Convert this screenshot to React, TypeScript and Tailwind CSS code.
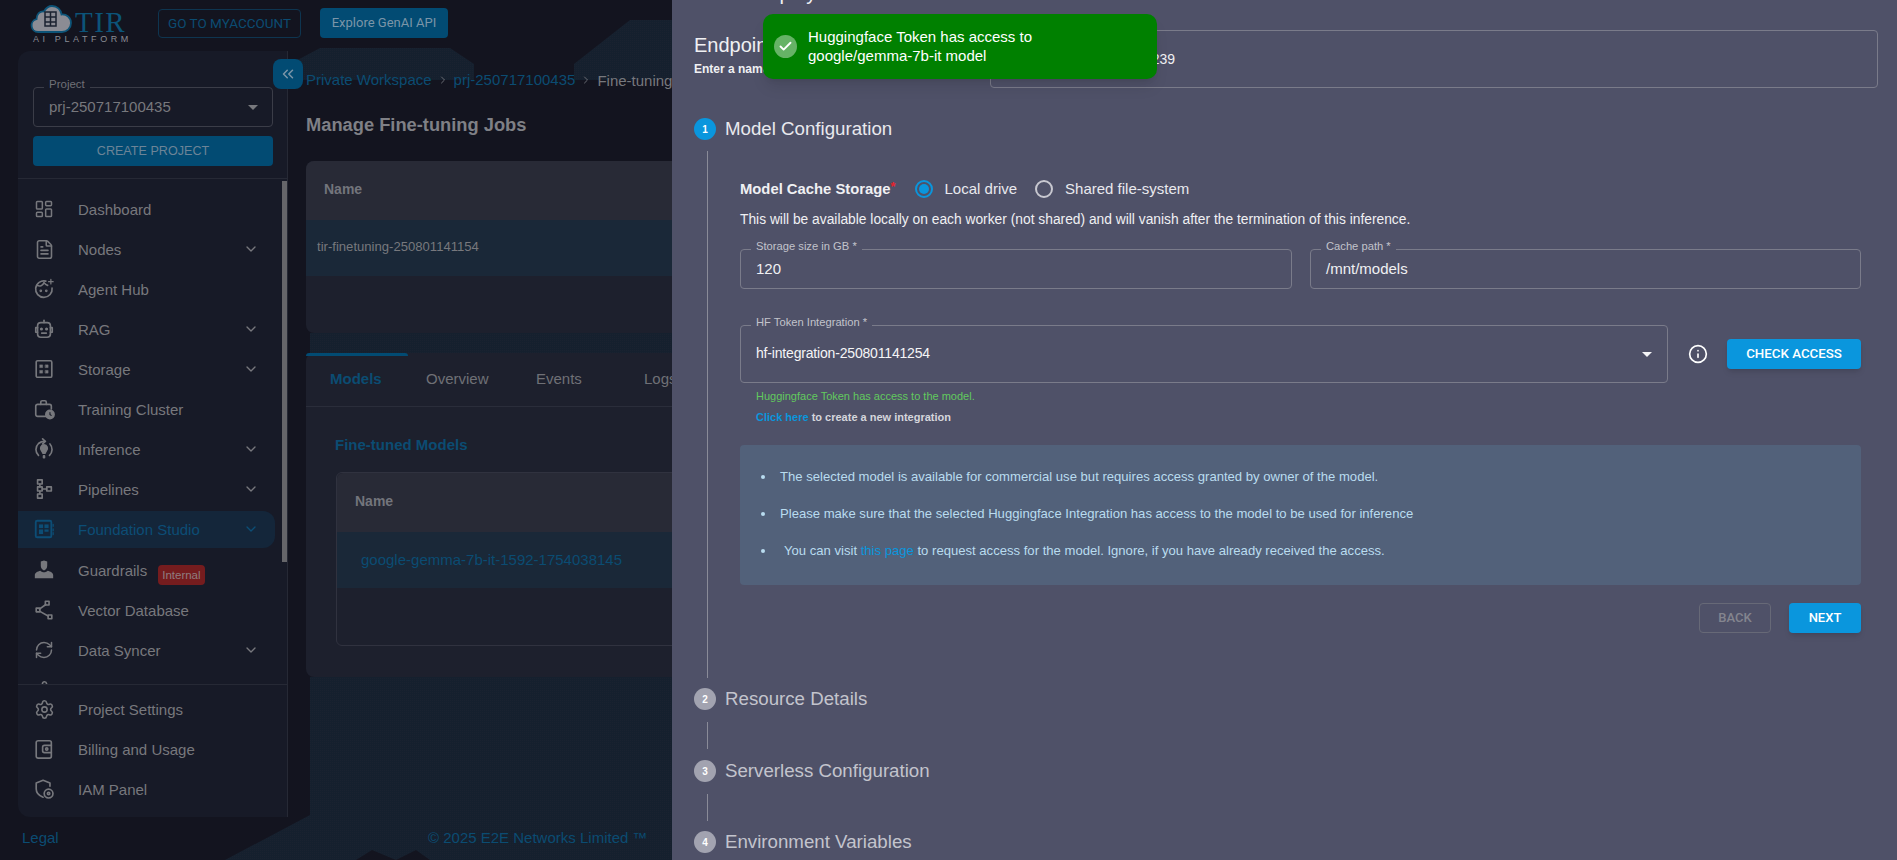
import { ChevronDown, ChevronRight, ChevronsLeft, FileText, LayoutDashboard, RefreshCw, Settings, Info, Check } from 'lucide-react';
import type { ReactNode } from 'react';

const sans = 'font-["Liberation_Sans",Arial,sans-serif]';

function Svg({ children, className = '' }: { children: ReactNode; className?: string }) {
  return (
    <svg viewBox="0 0 24 24" fill="none" stroke="currentColor" strokeWidth="1.8" strokeLinecap="round" strokeLinejoin="round" className={`h-[22px] w-[22px] ${className}`}>
      {children}
    </svg>
  );
}

const icons: Record<string, ReactNode> = {
  dashboard: <LayoutDashboard className="h-[20px] w-[20px]" strokeWidth={1.8} />,
  nodes: <FileText className="h-[21px] w-[21px]" strokeWidth={1.8} />,
  agent: (
    <Svg>
      <path d="M14 3.400A9 9 0 1 0 20.800 11" />
      <path d="M4.500 8c3 1.500 6 .5 7.500-3 1 1.500 2 2.500 4 3" />
      <circle cx="8.500" cy="14" r=".6" fill="currentColor" />
      <circle cx="14.500" cy="14" r=".6" fill="currentColor" />
      <path d="M19.500 1.500v5M17 4h5" strokeWidth="1.400" />
    </Svg>
  ),
  rag: (
    <Svg>
      <path d="M12 2.500v2.500" />
      <rect x="5" y="5" width="14" height="16" rx="3.500" />
      <path d="M5 10.500H3v5h2M19 10.500h2v5h-2" />
      <circle cx="9.200" cy="12" r=".8" fill="currentColor" />
      <circle cx="14.800" cy="12" r=".8" fill="currentColor" />
      <path d="M9.500 16.500h5" />
    </Svg>
  ),
  storage: (
    <Svg>
      <rect x="3.500" y="3" width="17" height="18" rx="1.500" />
      <rect x="7.500" y="7.500" width="3" height="3" fill="currentColor" strokeWidth=".5" />
      <rect x="13.500" y="7.500" width="3" height="3" fill="currentColor" strokeWidth=".5" />
      <rect x="7.500" y="13.500" width="3" height="3" fill="currentColor" strokeWidth=".5" />
      <rect x="13.500" y="13.500" width="3" height="3" fill="currentColor" strokeWidth=".5" />
    </Svg>
  ),
  training: (
    <Svg>
      <path d="M14 20H5a2 2 0 0 1-2-2V9a2 2 0 0 1 2-2h13a2 2 0 0 1 2 2v3" />
      <path d="M8.500 7V4.500A1.500 1.500 0 0 1 10 3h3a1.500 1.500 0 0 1 1.500 1.500V7" />
      <circle cx="18.500" cy="18" r="4.500" fill="currentColor" />
      <path d="M18.500 15.800V18l1.300 1" stroke="#171a27" strokeWidth="1.200" />
    </Svg>
  ),
  inference: (
    <Svg>
      <path d="M6 19A9 9 0 0 1 6 6c1.800-1.500 4-2.300 6.500-2.300" />
      <path d="M10.500 1l3 2.700-3 2.700" />
      <path d="M18.500 6.500A9 9 0 0 1 18 19" />
      <path d="M12 7.500a3.800 3.800 0 0 1 2.500 6.500c-.8.8-1.200 1.500-1.300 2.500h-2.400c-.1-1-.5-1.700-1.300-2.500A3.800 3.800 0 0 1 12 7.500z" fill="currentColor" />
      <path d="M11.500 19.500h1v2h-1z" fill="currentColor" />
    </Svg>
  ),
  pipelines: (
    <Svg>
      <rect x="5" y="2" width="5" height="4.500" />
      <rect x="5" y="9.700" width="5" height="4.500" />
      <rect x="5" y="17.500" width="5" height="4.500" />
      <rect x="15" y="9.700" width="5" height="4.500" />
      <path d="M7.500 6.500v3.200M7.500 14.200v3.300M10 12h5" />
    </Svg>
  ),
  foundation: (
    <Svg>
      <rect x="3" y="3" width="17" height="18" rx="1.500" strokeWidth="2" />
      <rect x="6.500" y="7" width="4.500" height="4" fill="currentColor" stroke="none" />
      <rect x="12.500" y="7" width="4.500" height="4" fill="currentColor" stroke="none" />
      <rect x="6.500" y="12.500" width="4.500" height="5" fill="currentColor" stroke="none" />
      <rect x="12.500" y="12.500" width="4.500" height="2.500" fill="currentColor" stroke="none" />
      <path d="M22 7v2M22 12v2M22 16v2" strokeWidth="1.400" />
    </Svg>
  ),
  guardrails: (
    <Svg>
      <path d="M12 1.500l3.500 1.300v4.500c0 2.700-1.600 4.400-3.500 5.200-1.900-.8-3.500-2.500-3.500-5.200V2.800z" fill="currentColor" stroke="none" />
      <path d="M8 12.800c1 1 2.500 1.700 4 1.700s3-.7 4-1.700c3 .7 6 2.300 6 4.700V21H2v-3.500c0-2.400 3-4 6-4.700z" fill="currentColor" stroke="none" />
    </Svg>
  ),
  vector: (
    <Svg>
      <rect x="13.500" y="2.500" width="4" height="4" />
      <rect x="3.500" y="10" width="4" height="4" />
      <rect x="16.500" y="17.500" width="4" height="4" />
      <path d="M14 6l-7 5M7.500 13.500l9 5" />
    </Svg>
  ),
  syncer: <RefreshCw className="h-[20px] w-[20px]" strokeWidth={1.8} />,
  settings: <Settings className="h-[21px] w-[21px]" strokeWidth={1.8} />,
  billing: (
    <Svg>
      <rect x="3.500" y="3" width="16.500" height="19" rx="2" />
      <path d="M20 8h-7.500a2 2 0 0 0-2 2v4a2 2 0 0 0 2 2H20" />
      <circle cx="15" cy="12" r="1.200" />
    </Svg>
  ),
  iam: (
    <Svg>
      <path d="M11 21c-4-1.500-7.500-4-7.500-9V5.500L11 2.500l7.500 3v3.500" />
      <circle cx="17" cy="17" r="4.800" />
      <circle cx="17" cy="17" r="1.300" />
    </Svg>
  ),
};

function NavItem({ icon, label, chevron, active, badge }: { icon: string; label: string; chevron?: boolean; active?: boolean; badge?: boolean }) {
  return (
    <div className={`flex h-[40px] items-center ${active ? 'text-[#0c4d75]' : 'text-[#77787d]'}`}>
      <div className={`flex h-[37px] w-[257px] items-center rounded-r-xl ${active ? 'bg-[#14263a]' : ''}`}>
        <div className="flex w-[60px] shrink-0 justify-center">
          <span className="ml-[-8px] flex w-[26px] justify-center">{icons[icon]}</span>
        </div>
        <span className="text-[15px] leading-none">{label}</span>
        {badge && <span className="ml-[11px] mt-[9px] rounded-[4px] bg-[#751c1e] px-[4px] py-[3px] text-[11.500px] leading-[14px] text-[#8f7d80]">Internal</span>}
        {chevron && <ChevronDown className="ml-auto mr-[16px] h-[16px] w-[16px]" strokeWidth={2} />}
      </div>
    </div>
  );
}

function Sidebar() {
  return (
    <aside className="relative flex h-[766px] w-[270px] shrink-0 flex-col rounded-l-xl border-r border-[#262935] bg-[#171a27]">
      <div className="border-b border-[#262935] px-[15px] pt-[36px] pb-[12px]">
        <div className="relative flex h-[40px] w-[240px] items-center justify-between rounded-[4px] border border-[#3b3d48] pl-[15px] pr-[14px]">
          <span className="absolute left-[10px] top-[-11px] bg-[#171a27] px-[5px] text-[11.500px] leading-[14px] text-[#6f7076]">Project</span>
          <span className="text-[15px] text-[#77787d]">prj-250717100435</span>
          <span className="h-0 w-0 border-x-[5px] border-t-[5px] border-x-transparent border-t-[#77787d]" />
        </div>
        <div className="mt-[9px] flex h-[30px] w-[240px] items-center justify-center rounded-[4px] bg-[#024b73] text-[12.600px] font-medium text-[#6c8497]">CREATE PROJECT</div>
      </div>
      <div className="relative h-[505px] overflow-hidden pt-[10px]">
        <NavItem icon="dashboard" label="Dashboard" />
        <NavItem icon="nodes" label="Nodes" chevron />
        <NavItem icon="agent" label="Agent Hub" />
        <NavItem icon="rag" label="RAG" chevron />
        <NavItem icon="storage" label="Storage" chevron />
        <NavItem icon="training" label="Training Cluster" />
        <NavItem icon="inference" label="Inference" chevron />
        <NavItem icon="pipelines" label="Pipelines" chevron />
        <NavItem icon="foundation" label="Foundation Studio" chevron active />
        <div className="pt-[1px]">
          <NavItem icon="guardrails" label="Guardrails" badge />
          <NavItem icon="vector" label="Vector Database" />
          <NavItem icon="syncer" label="Data Syncer" chevron />
          <NavItem icon="settings" label="" />
        </div>
        <div className="absolute right-0 top-[2px] h-[381px] w-[5px] bg-[#66666a]" />
      </div>
      <div className="border-t border-[#262935] pt-[4px]">
        <NavItem icon="settings" label="Project Settings" />
        <NavItem icon="billing" label="Billing and Usage" />
        <NavItem icon="iam" label="IAM Panel" />
      </div>
    </aside>
  );
}

function Main() {
  return (
    <main className="w-[1400px] shrink-0 pl-[18px]">
      <div className="flex h-[57px] items-center gap-[5px] text-[15px] leading-none">
        <span className="text-[#0b4c72]">Private Workspace</span>
        <ChevronRight className="h-[12px] w-[12px] text-[#6a6c74]" />
        <span className="text-[#0b4c72]">prj-250717100435</span>
        <ChevronRight className="h-[12px] w-[12px] text-[#6a6c74]" />
        <span className="mt-[2px] text-[#77787d]">Fine-tuning Jobs</span>
      </div>
      <h1 className="flex h-[53px] items-start pt-[6px] text-[18.300px] font-bold leading-[22px] text-[#7f8086]">Manage Fine-tuning Jobs</h1>
      <section className="h-[172px] rounded-lg bg-[#1d202d]">
        <div className="flex h-[59px] items-center rounded-t-lg bg-[#282a36] pb-[2px] pl-[18px] text-[14px] font-bold text-[#73757c]">Name</div>
        <div className="flex h-[56px] items-center bg-[#1a2838] pb-[2px] pl-[11px] text-[13.100px] text-[#77787d]">tir-finetuning-250801141154</div>
      </section>
      <section className="relative mt-[20px] h-[324px] rounded-lg bg-[#1d202d]">
        <div className="absolute left-0 top-0 h-[3px] w-[102px] rounded-t bg-[#024b73]" />
        <div className="flex h-[54px] items-center border-b border-[#2a2d3a] text-[15px] text-[#6f7076]">
          <span className="ml-[24px] w-[96px] font-bold text-[#0b4c72]">Models</span>
          <span className="w-[110px]">Overview</span>
          <span className="w-[108px]">Events</span>
          <span>Logs</span>
        </div>
        <h2 className="ml-[29px] mt-[28px] text-[15px] font-bold leading-[20px] text-[#0b4c72]">Fine-tuned Models</h2>
        <div className="ml-[30px] mt-[17px] h-[174px] rounded-md border border-[#30323f]">
          <div className="flex h-[59px] items-center rounded-t-md bg-[#282a36] pb-[2px] pl-[18px] text-[14px] font-bold text-[#73757c]">Name</div>
          <div className="flex h-[56px] items-center bg-[#1a2838] pl-[24px] text-[15px] text-[#0b4c72]">google-gemma-7b-it-1592-1754038145</div>
        </div>
      </section>
    </main>
  );
}

function Step({ n, label, active }: { n: number; label: string; active?: boolean }) {
  return (
    <div className="flex h-[22px] items-center gap-[9px]">
      <span className={`flex h-[22px] w-[22px] items-center justify-center rounded-full text-[10px] font-bold text-white ${active ? 'bg-[#0a96dd]' : 'bg-[#a2a3b0]'}`}>{n}</span>
      <span className={`text-[18.700px] leading-none ${active ? 'text-[#e9e9ee]' : 'text-[#c3c4cd]'}`}>{label}</span>
    </div>
  );
}

function Field({ label, value, className }: { label: string; value: string; className: string }) {
  return (
    <div className={`relative flex h-[40px] items-center rounded-[4px] border border-[#7a7b8a] pl-[15px] ${className}`}>
      <span className="absolute left-[10px] top-[-11px] bg-[#4f5168] px-[5px] text-[11.200px] leading-[14px] text-[#c2c3cb]">{label}</span>
      <span className="text-[15px] text-[#f0f0f3]">{value}</span>
    </div>
  );
}

function Drawer() {
  return (
    <div className={`absolute right-0 top-0 h-[860px] w-[1225px] overflow-hidden bg-[#4f5168] ${sans}`}>
      <div className="-mt-[17px] pl-[22px] text-[20px] leading-[20px] text-[#f0f0f3]">Model Deploy</div>
      {/* Endpoint name */}
      <div className="mt-[27px] flex h-[58px] items-start pl-[22px]">
        <div className="w-[296px] pt-[3px]">
          <div className="text-[20px] leading-[24px] text-[#f0f0f3]">Endpoint Name</div>
          <div className="mt-[5px] text-[12px] font-bold leading-[14px] text-[#f0f0f3]">Enter a name for your endpoint</div>
        </div>
        <div className="flex h-[58px] w-[888px] items-center rounded-[4px] border border-[#7a7b8a] pl-[17px]">
          <span className="text-[14px] text-[#f0f0f3]">tir-endpoint-250801141239</span>
        </div>
      </div>

      <div className="mt-[30px] pl-[22px]">
        <Step n={1} label="Model Configuration" active />
      </div>
      {/* Step body, hung off the stepper line */}
      <div className="ml-[35px] mt-[11px] h-[527px] border-l border-[#8a8b98] pl-[32px] pt-[28px]">
        <div className="flex h-[20px] items-center">
          <span className="text-[14.800px] font-bold text-[#f0f0f3]">Model Cache Storage</span>
          <span className="mb-[5px] text-[13px] font-bold leading-none text-[#e8222c]">*</span>
          <span className="ml-[19px] flex h-[18px] w-[18px] items-center justify-center rounded-full border-2 border-[#0a96dd]">
            <span className="h-[10px] w-[10px] rounded-full bg-[#0a96dd]" />
          </span>
          <span className="ml-[12px] text-[15px] text-[#e9e9ee]">Local drive</span>
          <span className="ml-[18px] h-[18px] w-[18px] rounded-full border-2 border-[#c8c8d0]" />
          <span className="ml-[12px] text-[15px] text-[#e9e9ee]">Shared file-system</span>
        </div>
        <p className="mt-[12px] text-[13.800px] leading-[18px] text-[#f0f0f3]">This will be available locally on each worker (not shared) and will vanish after the termination of this inference.</p>
        <div className="mt-[20px] flex gap-[18px]">
          <Field label="Storage size in GB *" value="120" className="w-[552px]" />
          <Field label="Cache path *" value="/mnt/models" className="w-[551px]" />
        </div>
        <div className="mt-[36px] flex items-center">
          <div className="relative flex h-[58px] w-[928px] items-center justify-between rounded-[4px] border border-[#7a7b8a] px-[15px]">
            <span className="absolute left-[10px] top-[-11px] bg-[#4f5168] px-[5px] text-[11.200px] leading-[14px] text-[#c2c3cb]">HF Token Integration *</span>
            <span className="mb-[2px] text-[14px] tracking-[-0.180px] text-[#f5f5f7]">hf-integration-250801141254</span>
            <span className="h-0 w-0 border-x-[5px] border-t-[5px] border-x-transparent border-t-[#f5f5f7]" />
          </div>
          <Info className="ml-[20px] h-[20px] w-[20px] text-white" strokeWidth={2} />
          <button className="ml-[19px] h-[30px] w-[134px] rounded-[4px] bg-[#0a96dd] font-['Roboto',sans-serif] text-[13.300px] font-medium text-white shadow-md">CHECK ACCESS</button>
        </div>
        <div className="ml-[16px] mt-[6px] text-[11px] font-medium leading-[14px] text-[#62c95e]">Huggingface Token has access to the model.</div>
        <div className="ml-[16px] mt-[7px] text-[11px] font-bold leading-[14px] text-[#d5d6dc]">
          <span className="text-[#0a96dd]">Click here</span> to create a new integration
        </div>
        <div className="mt-[21px] h-[140px] w-[1121px] rounded-[4px] bg-[#52617a] pt-[23px] text-[13.100px] text-[#b9dcef]">
          <div className="flex h-[18px] items-center">
            <span className="ml-[21px] mr-[15px] h-[4px] w-[4px] rounded-full bg-[#b9dcef]" />
            The selected model is available for commercial use but requires access granted by owner of the model.
          </div>
          <div className="mt-[19px] flex h-[18px] items-center">
            <span className="ml-[21px] mr-[15px] h-[4px] w-[4px] rounded-full bg-[#b9dcef]" />
            Please make sure that the selected Huggingface Integration has access to the model to be used for inference
          </div>
          <div className="mt-[19px] flex h-[18px] items-center">
            <span className="ml-[21px] mr-[19px] h-[4px] w-[4px] rounded-full bg-[#b9dcef]" />
            <span>You can visit <span className="text-[#0a96dd]">this page</span> to request access for the model. Ignore, if you have already received the access.</span>
          </div>
        </div>
        <div className="mt-[18px] flex w-[1121px] justify-end gap-[18px] font-['Roboto',sans-serif] text-[13px] font-medium">
          <button className="h-[30px] w-[72px] rounded-[4px] border border-[#676977] text-[#84858f]">BACK</button>
          <button className="h-[30px] w-[72px] rounded-[4px] bg-[#0a96dd] text-white shadow-md">NEXT</button>
        </div>
      </div>
      <div className="mt-[10px] pl-[22px]">
        <Step n={2} label="Resource Details" />
      </div>
      <div className="ml-[35px] mt-[12px] h-[27px] border-l border-[#8a8b98]" />
      <div className="mt-[11px] pl-[22px]">
        <Step n={3} label="Serverless Configuration" />
      </div>
      <div className="ml-[35px] mt-[12px] h-[27px] border-l border-[#8a8b98]" />
      <div className="mt-[10px] pl-[22px]">
        <Step n={4} label="Environment Variables" />
      </div>
    </div>
  );
}

function Toast() {
  return (
    <div className={`absolute left-[763px] top-[14px] flex h-[65px] w-[394px] items-center rounded-[10px] bg-[#008000] pl-[11px] shadow-lg ${sans}`}>
      <span className="flex h-[23px] w-[23px] shrink-0 items-center justify-center rounded-full bg-[#66b366]">
        <Check className="h-[15px] w-[15px] text-white" strokeWidth={3} />
      </span>
      <p className="mb-[2px] ml-[11px] w-[300px] text-[15px] leading-[19px] text-white">Huggingface Token has access to google/gemma-7b-it model</p>
    </div>
  );
}

function Texture() {
  return (
    <svg className="absolute left-0 top-0 h-[860px] w-[672px]" viewBox="0 0 672 860">
      <defs>
        <pattern id="dither" width="2" height="2" patternUnits="userSpaceOnUse">
          <rect width="2" height="2" fill="#15202e" />
          <rect width="1" height="1" fill="#1a2230" />
        </pattern>
      </defs>
      <path d="M290 64l30-16h130l24 16v16H290z" fill="url(#dither)" />
      <path d="M574 64l56-44h42v60H574z" fill="url(#dither)" />
      <path d="M310 333h362v20H310zM310 677h362v183H430l-14 -10-20 10-24-10-16 10H225l85-45z" fill="url(#dither)" />
    </svg>
  );
}

export default function App() {
  return (
    <div className={`relative h-[860px] w-[1897px] overflow-hidden bg-[#13141f] ${sans}`}>
      <Texture />
      <div className="relative flex h-full flex-col">
        <header className="flex h-[51px] items-start pl-[30px] pt-[5px]">
          {/* TIR logo */}
          <div className="flex w-[128px] flex-col">
            <div className="flex h-[28px] items-center">
              <svg viewBox="0 0 42 28" className="h-[28px] w-[42px] shrink-0">
                <path d="M8 27a6.500 6.500 0 0 1-1.500-12.800C6.500 9 10 6 14 6.500 16 3 19 1 22 1c5 0 9 3.500 9.500 8.500 5-.5 9.500 3 9.500 8.500 0 5-4 9-9 9z" fill="#8b8c94" stroke="#0d5478" strokeWidth="1.800" />
                <rect x="15" y="7" width="11" height="14" fill="none" stroke="#1b2230" strokeWidth="1.500" />
                <path d="M15 12h11M15 17h11M20.500 7v14" stroke="#1b2230" strokeWidth="1.500" />
              </svg>
              <span className="ml-[3px] mt-[6px] font-['Liberation_Serif',serif] text-[29px] leading-none tracking-[1.500px] text-[#0c5479]">TIR</span>
            </div>
            <span className="mt-[1px] pl-[3px] text-[9px] leading-[10px] tracking-[3.600px] text-[#8a8c94] whitespace-nowrap">AI PLATFORM</span>
          </div>
          <div className="mt-[4px] flex h-[29px] w-[143px] items-center justify-center rounded-[4px] border border-[#0e3550] font-['Roboto',sans-serif] text-[13.500px] text-[#0b4c72]">GO TO MYACCOUNT</div>
          <div className="ml-[19px] mt-[3px] flex h-[30px] w-[128px] items-center justify-center rounded-[4px] bg-[#024b73] font-['Roboto',sans-serif] text-[13px] text-[#7b95a8]">Explore GenAI API</div>
        </header>
        <div className="relative flex h-[766px] pl-[18px]">
          <Sidebar />
          <Main />
          <button className="absolute left-[273px] top-[8px] flex h-[30px] w-[30px] items-center justify-center rounded-lg bg-[#024b73] text-[#7b95a8]">
            <ChevronsLeft className="h-[18px] w-[18px]" strokeWidth={2} />
          </button>
        </div>
        <footer className="flex flex-1 items-center pl-[22px] text-[15px] text-[#0b4c72]">
          <span className="w-[406px]">Legal</span>
          <span>© 2025 E2E Networks Limited ™</span>
        </footer>
      </div>
      <Drawer />
      <Toast />
    </div>
  );
}
